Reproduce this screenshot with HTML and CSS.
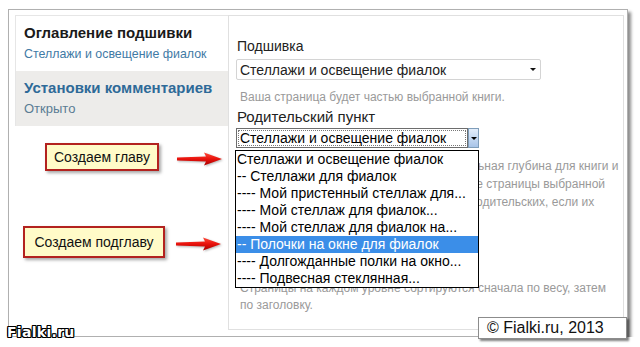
FILE: index.html
```html
<!DOCTYPE html>
<html lang="ru">
<head>
  <meta charset="UTF-8">
  <meta name="viewport" content="width=device-width, initial-scale=1.0">
  <title>Подшивка — Fialki.ru</title>
  <link rel="stylesheet" href="styles.css">
</head>
<body>

  <!-- Framed screenshot: vertical tabs of the book settings -->
  <div class="frame">
    <div class="tabs">
      <ul class="tab-list">
        <li class="tab">
          <strong class="tab-title">Оглавление подшивки</strong>
          <span class="tab-summary">Стеллажи и освещение фиалок</span>
        </li>
        <li class="tab tab-selected">
          <strong class="tab-title">Установки комментариев</strong>
          <span class="tab-summary">Открыто</span>
        </li>
      </ul>

      <div class="tab-pane">
        <label class="field-label">Подшивка</label>
        <div class="select">
          <span>Стеллажи и освещение фиалок</span>
          <span class="select-arrow"></span>
        </div>
        <div class="field-desc desc-book">Ваша страница будет частью выбранной книги.</div>

        <label class="field-label label-parent">Родительский пункт</label>
        <div class="combo">
          <div class="combo-value"><span class="combo-focus">Стеллажи и освещение фиалок</span></div>
          <div class="combo-btn"><span class="combo-arrow"></span></div>
          <ul class="combo-list">
            <li>Стеллажи и освещение фиалок</li>
            <li>-- Стеллажи для фиалок</li>
            <li>---- Мой пристенный стеллаж для...</li>
            <li>---- Мой стеллаж для фиалок...</li>
            <li>---- Мой стеллаж для фиалок на...</li>
            <li class="combo-selected">-- Полочки на окне для фиалок</li>
            <li>---- Долгожданные полки на окно...</li>
            <li>---- Подвесная стеклянная...</li>
          </ul>
        </div>
        <div class="field-desc desc-parent">
          Родительская страница в книге. Максимальная глубина для книги и<br>
          всех дочерних страниц равна 9. Некоторые страницы выбранной<br>
          книги могут быть недоступны в качестве родительских, если их<br>
          выбор превысит этот предел.
        </div>

        <label class="field-label label-weight">Вес</label>
        <div class="select select-small"><span>0</span><span class="select-arrow"></span></div>
        <div class="field-desc desc-weight">
          Страницы на каждом уровне сортируются сначала по весу, затем<br>
          по заголовку.
        </div>
      </div>
    </div>
  </div>

  <!-- Annotations over the screenshot -->
  <div class="note note-chapter">Создаем главу</div>
  <div class="note note-subchapter">Создаем подглаву</div>

  <svg class="arrow arrow-chapter" width="46" height="14" viewBox="0 0 46 14">
    <defs>
      <linearGradient id="arrowFill" x1="0" y1="0" x2="0" y2="1">
        <stop offset="0" stop-color="#ff4a3a"/>
        <stop offset="0.5" stop-color="#e8120c"/>
        <stop offset="1" stop-color="#a80000"/>
      </linearGradient>
    </defs>
    <path d="M0 5.6 L29 4.6 L27 0.5 L45 7 L27 13.5 L29 9.4 L0 8.4 Z" fill="url(#arrowFill)"/>
  </svg>
  <svg class="arrow arrow-subchapter" width="46" height="14" viewBox="0 0 46 14">
    <path d="M0 5.6 L29 4.6 L27 0.5 L45 7 L27 13.5 L29 9.4 L0 8.4 Z" fill="url(#arrowFill)"/>
  </svg>

  <div class="logo">Fialki.ru</div>
  <div class="copyright">© Fialki.ru, 2013</div>

</body>
</html>
```

FILE: styles.css
```css
/* General styles */
body {
  margin: 0;
  padding: 9px 0 0 8px;
  background-color: #ffffff;
  font-family: "Liberation Sans", Arial, sans-serif;
  color: #222;
}

ul {
  list-style: none;
  margin: 0;
  padding: 0;
}

/* Screenshot frame */
.frame {
  box-sizing: border-box;
  width: 620px;
  height: 328px;
  padding: 5px 3px 0 6px;
  border: 1px solid #b0b0b0;
  box-shadow: 3px 3px 3px rgba(0, 0, 0, 0.45);
}

.tabs {
  display: flex;
  align-items: flex-start;
}

/* Vertical tab list */
.tab-list {
  width: 212px;
  border-top: 1px solid #e6e6e6;
  border-left: 1px solid #e6e6e6;
}

.tab {
  display: flex;
  flex-direction: column;
  gap: 4px;
  padding: 8px 0 9px 8px;
}

.tab-title {
  font-size: 15px;
  line-height: 18px;
  color: #1a1a1a;
}

.tab-summary {
  font-size: 12.4px;
  line-height: 16px;
  color: #3f7aa5;
}

.tab-selected {
  background-color: #edecea;
}

.tab-selected .tab-title {
  color: #2e6a98;
}

.tab-selected .tab-summary {
  font-size: 13px;
  color: #5a7c94;
}

/* Tab pane */
.tab-pane {
  box-sizing: border-box;
  flex: 1;
  height: 315px;
  padding: 22px 0 0 7px;
  border: 1px solid #e0e0e0;
  display: flex;
  flex-direction: column;
  align-items: flex-start;
}

.field-label {
  font-size: 14px;
  line-height: 17px;
  color: #222;
  padding-left: 1px;
}

.label-parent {
  font-size: 15px;
  line-height: 18px;
  margin-top: 3px;
}

.label-weight {
  font-size: 15px;
  line-height: 18px;
  margin-top: 4px;
}

.select {
  box-sizing: border-box;
  width: 305px;
  height: 21px;
  margin-top: 4px;
  padding: 0 4px 0 3px;
  display: flex;
  align-items: center;
  justify-content: space-between;
  font-size: 14px;
  color: #222;
  border: 1px solid #d4d4d4;
  border-radius: 2px;
}

.select-arrow {
  width: 0;
  height: 0;
  border-left: 3px solid transparent;
  border-right: 3px solid transparent;
  border-top: 3px solid #111;
}

.select-small {
  width: 60px;
  height: 20px;
  margin-top: 2px;
}

.field-desc {
  font-size: 12px;
  line-height: 16px;
  color: #9a9a9a;
  padding-left: 4px;
  white-space: nowrap;
}

.desc-book {
  margin-top: 9px;
}

.desc-parent {
  margin-top: 9px;
  line-height: 18px;
}

.desc-weight {
  margin-top: 7px;
  line-height: 17px;
}

/* Open combo box */
.combo {
  position: relative;
  display: flex;
  width: 243px;
  height: 20px;
  margin-top: 2px;
}

.combo-value {
  box-sizing: border-box;
  flex: 1;
  padding: 1px;
  border: 1px solid #6d6d6d;
  display: flex;
}

.combo-focus {
  flex: 1;
  border: 1px dotted #777;
  font-size: 14px;
  line-height: 14px;
  padding-left: 1px;
  color: #000;
}

.combo-btn {
  box-sizing: border-box;
  width: 11px;
  border: 1px solid #7f9db9;
  background: linear-gradient(#e4eefb, #a8c4e8);
  display: flex;
  align-items: center;
  justify-content: center;
}

.combo-arrow {
  width: 0;
  height: 0;
  border-left: 3px solid transparent;
  border-right: 3px solid transparent;
  border-top: 3px solid #000;
}

.combo-list {
  position: absolute;
  top: 22px;
  left: -1px;
  box-sizing: border-box;
  width: 244px;
  background-color: #ffffff;
  border: 1px solid #000;
  z-index: 2;
}

.combo-list li {
  height: 17px;
  line-height: 17px;
  padding-left: 1px;
  font-size: 14px;
  color: #000;
  white-space: nowrap;
}

.combo-list .combo-selected {
  background-color: #3b8ee8;
  color: #ffffff;
}

/* Annotations */
.note {
  position: absolute;
  box-sizing: border-box;
  display: flex;
  align-items: center;
  justify-content: center;
  font-size: 14px;
  color: #111;
  background-color: #fffbc8;
  border: 2px solid #b3221f;
  box-shadow: 2px 2px 3px rgba(0, 0, 0, 0.35);
}

.note-chapter {
  left: 45px;
  top: 143px;
  width: 114px;
  height: 28px;
}

.note-subchapter {
  left: 23px;
  top: 226px;
  width: 142px;
  height: 32px;
}

.arrow {
  position: absolute;
  filter: drop-shadow(1px 1px 1px rgba(0, 0, 0, 0.3));
}

.arrow-chapter {
  left: 177px;
  top: 152px;
}

.arrow-subchapter {
  left: 176px;
  top: 237px;
}

.logo {
  position: absolute;
  left: 7px;
  top: 325px;
  font-family: "DejaVu Sans", sans-serif;
  font-weight: bold;
  font-size: 14px;
  line-height: 15px;
  letter-spacing: 0.3px;
  color: #ffffff;
  text-shadow: 1px 0 0 #000, -1px 0 0 #000, 0 1px 0 #000, 0 -1px 0 #000,
    1px 1px 0 #000, -1px -1px 0 #000, 1px -1px 0 #000, -1px 1px 0 #000;
}

.copyright {
  position: absolute;
  left: 478px;
  top: 317px;
  box-sizing: border-box;
  width: 149px;
  height: 22px;
  padding-left: 8px;
  font-size: 16px;
  line-height: 20px;
  color: #111;
  background-color: #ffffff;
  border: 1px solid #8c8c8c;
  box-shadow: 2px 2px 2px rgba(0, 0, 0, 0.5);
}
```
